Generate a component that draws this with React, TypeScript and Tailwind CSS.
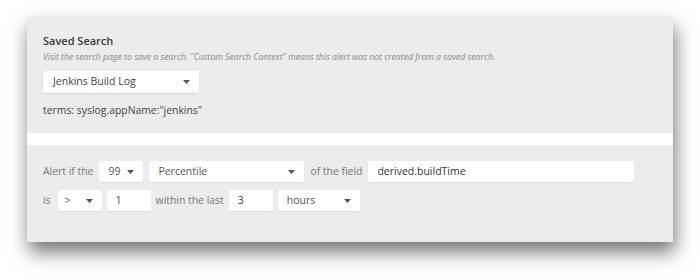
import React from "react";

const Caret = () => (
  <svg width="7" height="4" viewBox="0 0 7 4" className="shrink-0">
    <path d="M0 0 L7 0 L3.5 4 Z" fill="#555" />
  </svg>
);

const Select = ({ value, w, pl = "pl-[9px]" }: { value: string; w: string; pl?: string }) => (
  <div className={`${w} h-[21px] bg-white rounded-[2px] shadow-[0_1px_1px_rgba(0,0,0,0.08)] flex items-center justify-between ${pl} pr-[9px] text-[10.5px] text-[#555]`}>
    <span>{value}</span>
    <Caret />
  </div>
);

const Input = ({ value, w, bold = false }: { value: string; w: string; bold?: boolean }) => (
  <div className={`${w} h-[21px] bg-white rounded-[2px] shadow-[0_1px_1px_rgba(0,0,0,0.08)] flex items-center pl-[9px] text-[10.5px] ${bold ? "text-[#333] font-medium" : "text-[#444]"}`}>
    <span>{value}</span>
  </div>
);

export default function App() {
  return (
    <div className="w-[700px] h-[280px] bg-white pt-[17px] pl-[27px]" style={{ fontFamily: '"Open Sans", "Noto Sans", sans-serif' }}>
      <div className="w-[646px] bg-[#ececec] shadow-[2px_10px_18px_rgba(0,0,0,0.55)]">
        <div className="pt-[16px] px-[16px] pb-[15px]">
          <div className="text-[11px] leading-[16px] font-semibold text-[#3a3a3a]">Saved Search</div>
          <div className="mt-[2px] text-[8.7px] leading-[12px] italic text-[#888]">
            Visit the search page to save a search. "Custom Search Context" means this alert was not created from a saved search.
          </div>
          <div className="mt-[8px]">
            <div className="w-[156px] h-[22px] bg-white rounded-[2px] shadow-[0_1px_2px_rgba(0,0,0,0.1)] flex items-center justify-between pl-[10px] pr-[9px] text-[10.5px] text-[#444]">
              <span>Jenkins Build Log</span>
              <Caret />
            </div>
          </div>
          <div className="mt-[9px] text-[10.4px] leading-[16px] text-[#444]">terms: syslog.appName:"jenkins"</div>
        </div>
        <div className="h-[12px] bg-white" />
        <div className="pt-[16px] px-[16px] pb-[31px] flex flex-col gap-[8px] text-[10.4px] text-[#777]">
          <div className="flex items-center gap-[6px]">
            <span>Alert if the</span>
            <Select value="99" w="w-[44px]" />
            <Select value="Percentile" w="w-[155px]" />
            <span>of the field</span>
            <Input value="derived.buildTime" w="w-[266px]" bold />
          </div>
          <div className="flex items-center gap-[5px]">
            <span className="mr-[2px]">is</span>
            <Select value=">" w="w-[44px]" pl="pl-[7px]" />
            <Input value="1" w="w-[44px]" />
            <span>within the last</span>
            <Input value="3" w="w-[44px]" />
            <Select value="hours" w="w-[82px]" />
          </div>
        </div>
      </div>
    </div>
  );
}
